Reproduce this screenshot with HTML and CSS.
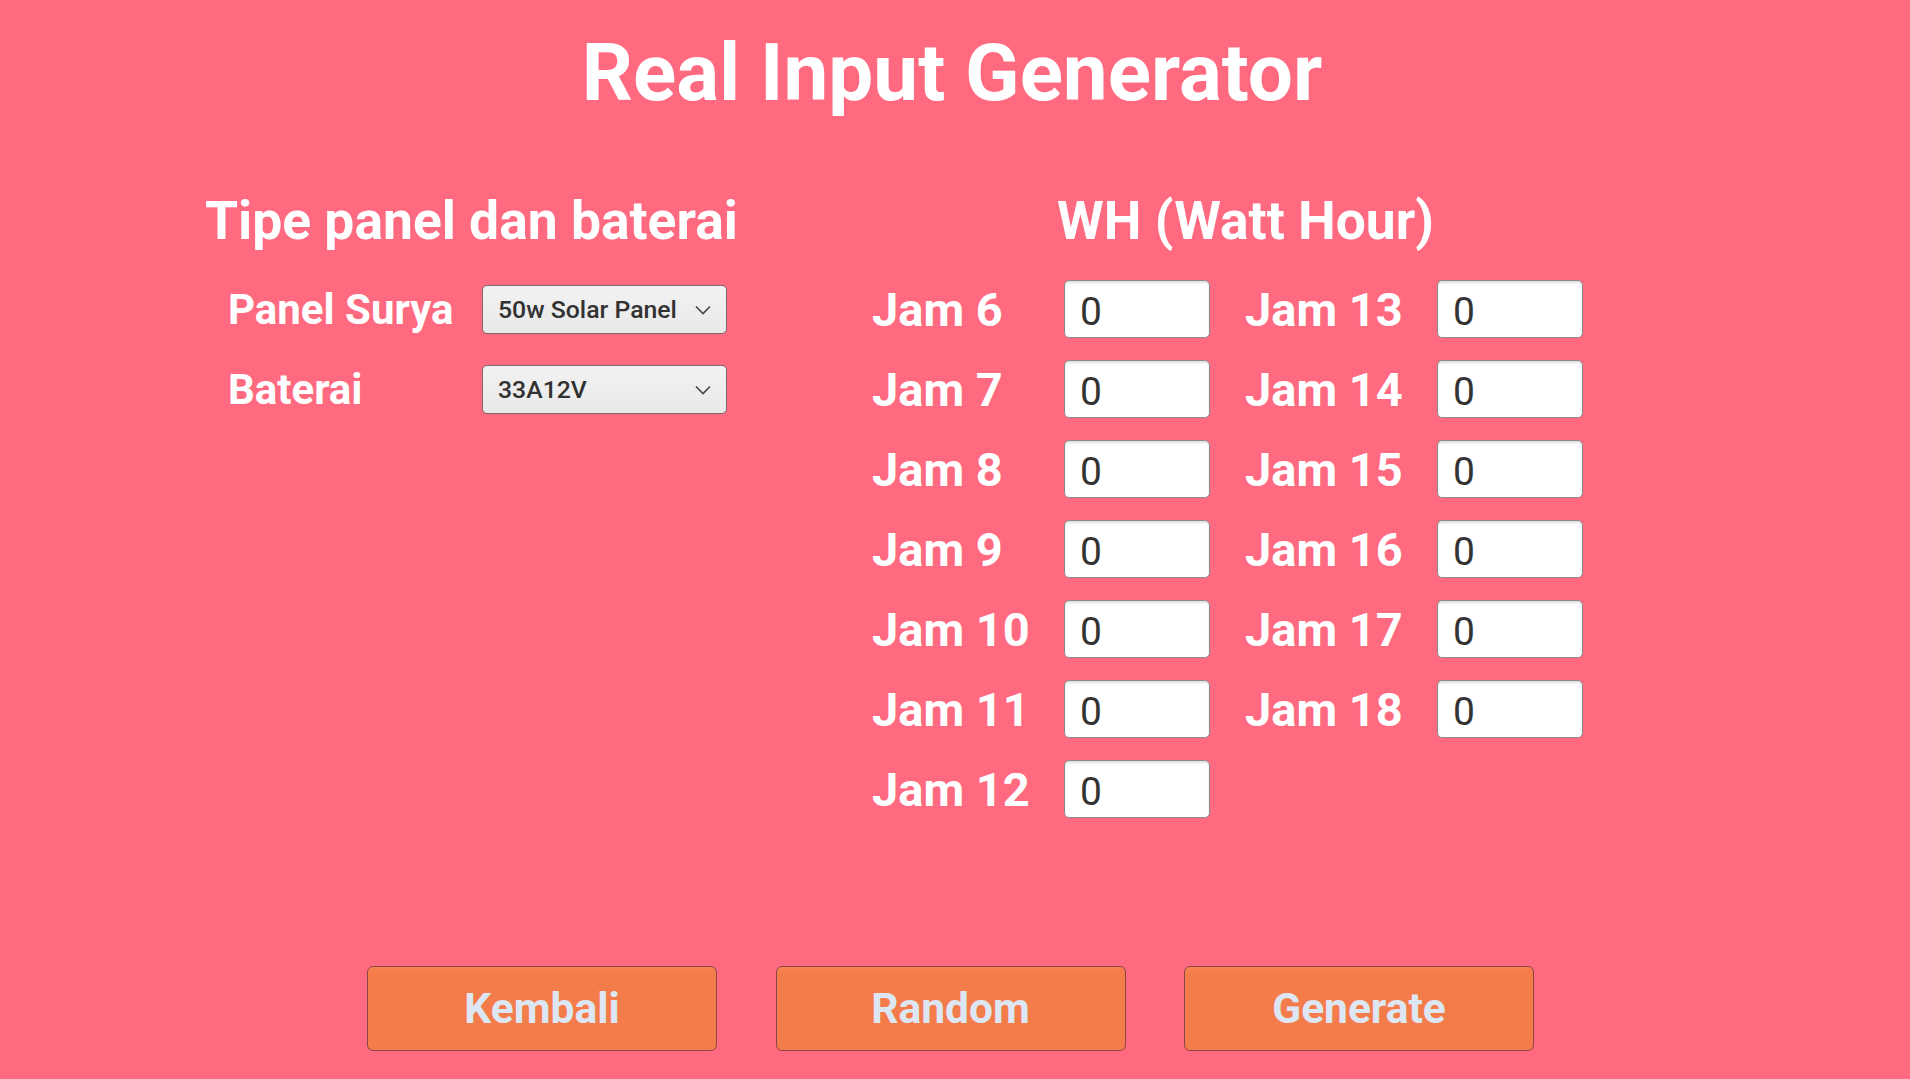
FILE: index.html
```html
<!DOCTYPE html>
<html lang="id">
<head>
<meta charset="utf-8">
<title>Real Input Generator</title>
<link rel="stylesheet" href="styles.css">
</head>
<body>
<h1 class="title">Real Input Generator</h1>
<main class="main">
  <section class="left">
    <h2 class="heading">Tipe panel dan baterai</h2>
    <div class="rows">
      <div class="row">
        <span class="label-sm">Panel Surya</span>
        <div class="select"><span>50w Solar Panel</span><svg class="chev" width="16" height="10" viewBox="0 0 16 10"><polyline points="1,1.5 8,8.5 15,1.5" fill="none" stroke="#444" stroke-width="1.6"/></svg></div>
      </div>
      <div class="row">
        <span class="label-sm">Baterai</span>
        <div class="select"><span>33A12V</span><svg class="chev" width="16" height="10" viewBox="0 0 16 10"><polyline points="1,1.5 8,8.5 15,1.5" fill="none" stroke="#444" stroke-width="1.6"/></svg></div>
      </div>
    </div>
  </section>
  <section class="right">
    <h2 class="heading heading-wh">WH (Watt Hour)</h2>
    <div class="grid">
      <span class="label">Jam 6</span><div class="input">0</div><span class="label label-2">Jam 13</span><div class="input">0</div>
      <span class="label">Jam 7</span><div class="input">0</div><span class="label label-2">Jam 14</span><div class="input">0</div>
      <span class="label">Jam 8</span><div class="input">0</div><span class="label label-2">Jam 15</span><div class="input">0</div>
      <span class="label">Jam 9</span><div class="input">0</div><span class="label label-2">Jam 16</span><div class="input">0</div>
      <span class="label">Jam 10</span><div class="input">0</div><span class="label label-2">Jam 17</span><div class="input">0</div>
      <span class="label">Jam 11</span><div class="input">0</div><span class="label label-2">Jam 18</span><div class="input">0</div>
      <span class="label">Jam 12</span><div class="input">0</div>
    </div>
  </section>
</main>
<div class="buttons">
  <button class="btn">Kembali</button>
  <button class="btn">Random</button>
  <button class="btn">Generate</button>
</div>
</body>
</html>
```
FILE: styles.css
```css
html, body {
  margin: 0;
  padding: 0;
}
body {
  background: #ff6a80;
  font-family: Roboto, "Liberation Sans", sans-serif;
  color: #ffffff;
  width: 1910px;
  height: 1079px;
  overflow: hidden;
}
.title {
  margin: 0;
  padding-top: 33px;
  padding-right: 6px;
  text-align: center;
  font-size: 80px;
  line-height: 80px;
  font-weight: 700;
}
.main {
  display: flex;
  padding-top: 76px;
  padding-left: 205px;
}
.left {
  width: 532px;
}
.heading {
  margin: 0 0 27px 0;
  font-size: 53.4px;
  line-height: 64px;
  font-weight: 700;
  white-space: nowrap;
}
.heading-wh {
  padding-left: 185px;
}
.rows {
  display: flex;
  flex-direction: column;
  gap: 22px;
  padding-left: 23px;
}
.row {
  display: flex;
  align-items: center;
  height: 58px;
}
.label-sm {
  width: 254px;
  font-size: 42px;
  font-weight: 700;
}
.select {
  box-sizing: border-box;
  width: 245px;
  height: 49px;
  border: 1px solid #7a6a6c;
  border-radius: 5px;
  background: linear-gradient(#f2f2f2, #e9e9e9);
  display: flex;
  align-items: center;
  justify-content: space-between;
  padding: 0 15px 0 15px;
  color: #323232;
  font-size: 24.8px;
  font-weight: 500;
}
.chev {
  display: block;
  margin-top: 1px;
}
.right {
  margin-left: 135px;
}
.grid {
  display: grid;
  grid-template-columns: 192px 146px 227px 146px;
  grid-auto-rows: 58px;
  row-gap: 22px;
}
.label {
  align-self: center;
  font-size: 47px;
  font-weight: 700;
  white-space: nowrap;
}
.label-2 {
  margin-left: 35px;
}
.input {
  box-sizing: border-box;
  height: 58px;
  border: 1px solid #8a8a8a;
  border-radius: 5px;
  background: #ffffff;
  box-shadow: inset 0 2px 2px rgba(0, 0, 0, 0.12);
  display: flex;
  align-items: center;
  padding-left: 15px;
  padding-top: 6px;
  color: #333333;
  font-size: 39px;
  font-weight: 400;
}
.buttons {
  display: flex;
  gap: 58.5px;
  padding-left: 367px;
  margin-top: 148px;
}
.btn {
  box-sizing: border-box;
  width: 350px;
  height: 85px;
  border: 1px solid #8c4646;
  border-radius: 6px;
  background: linear-gradient(#f7844f 0px, #f47c4b 6px, #f47c4b 100%);
  color: #dde7f4;
  font-family: Roboto, "Liberation Sans", sans-serif;
  font-size: 42.5px;
  font-weight: 700;
  padding: 0;
  margin: 0;
}
```
